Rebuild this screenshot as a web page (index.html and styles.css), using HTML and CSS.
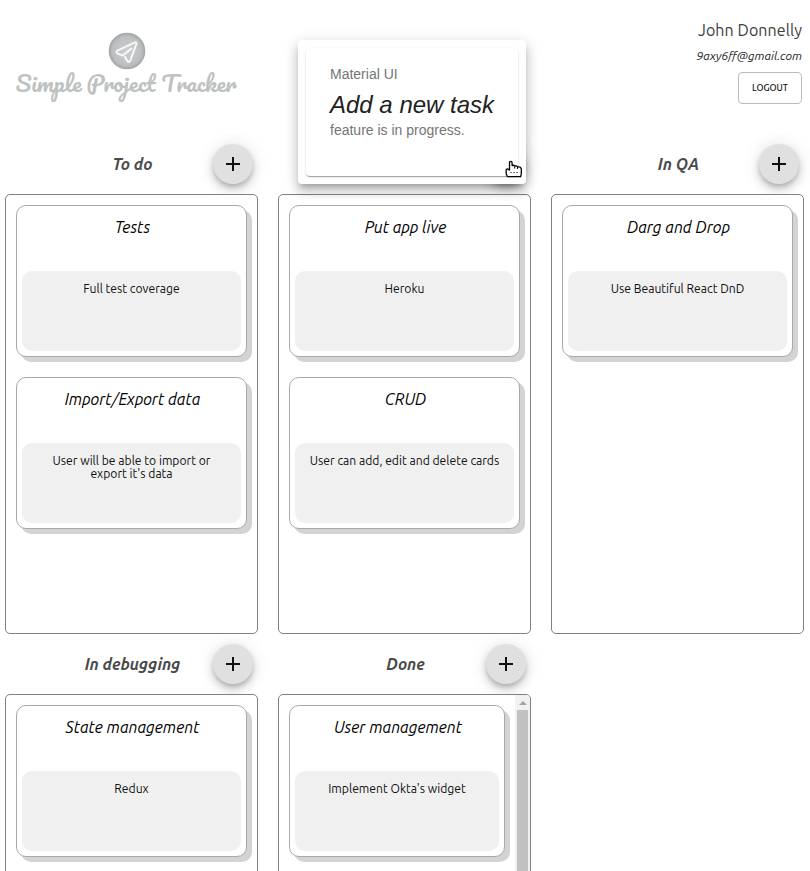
FILE: index.html
```html
<!DOCTYPE html>
<html lang="en">
<head>
<meta charset="utf-8">
<title>Simple Project Tracker</title>
<link rel="stylesheet" href="styles.css">
</head>
<body>
<header class="header">
  <svg class="logo" width="240" height="80" viewBox="0 0 240 80" role="img">
    <defs><radialGradient id="disc"><stop offset="0" stop-color="#cdd0d0"/><stop offset=".8" stop-color="#bcbfbf"/><stop offset="1" stop-color="#a1a4a4"/></radialGradient></defs>
    <circle cx="119" cy="21" r="18.3" fill="url(#disc)"/>
    <path d="M114.7 25.5 L123.5 18.5 M114.7 25.5 Q109.5 24 108.5 22.3 Q108 21.3 110 20.4 L126.5 12.6 Q129 11.6 128.4 14 L122.3 30.5 Q120.8 33.5 119 30.5 L117 27" fill="none" stroke="#f8f9f9" stroke-width="2" stroke-linecap="round" stroke-linejoin="round"/>
    <g class="logo-text">
      <text x="7.5" y="61.5" textLength="66" lengthAdjust="spacingAndGlyphs">Simple</text>
      <text x="78.5" y="61.5" textLength="69" lengthAdjust="spacingAndGlyphs">Project</text>
      <text x="153.5" y="61.5" textLength="75" lengthAdjust="spacingAndGlyphs">Tracker</text>
    </g>
  </svg>
  <div class="user">
    <div class="user-name">John Donnelly</div>
    <div class="user-mail">9axy6ff@gmail.com</div>
    <button class="logout">LOGOUT</button>
  </div>
</header>
<main class="board">
  <section class="column">
    <div class="column-head"><h2>To do</h2><button class="add"><svg width="24" height="24" viewBox="0 0 24 24"><path d="M19 13h-6v6h-2v-6H5v-2h6V5h2v6h6v2z"/></svg></button></div>
    <div class="column-body"><div class="cards">
      <article class="card"><h3>Tests</h3><p>Full test coverage</p></article>
      <article class="card"><h3>Import/Export data</h3><p>User will be able to import or<br>export it's data</p></article>
    </div></div>
  </section>
  <section class="column">
    <div class="column-head"><button class="add"><svg width="24" height="24" viewBox="0 0 24 24"><path d="M19 13h-6v6h-2v-6H5v-2h6V5h2v6h6v2z"/></svg></button></div>
    <div class="column-body"><div class="cards">
      <article class="card"><h3>Put app live</h3><p>Heroku</p></article>
      <article class="card"><h3>CRUD</h3><p>User can add, edit and delete cards</p></article>
    </div></div>
  </section>
  <section class="column">
    <div class="column-head"><h2>In QA</h2><button class="add"><svg width="24" height="24" viewBox="0 0 24 24"><path d="M19 13h-6v6h-2v-6H5v-2h6V5h2v6h6v2z"/></svg></button></div>
    <div class="column-body"><div class="cards">
      <article class="card"><h3>Darg and Drop</h3><p>Use Beautiful React DnD</p></article>
    </div></div>
  </section>
  <section class="column">
    <div class="column-head"><h2>In debugging</h2><button class="add"><svg width="24" height="24" viewBox="0 0 24 24"><path d="M19 13h-6v6h-2v-6H5v-2h6V5h2v6h6v2z"/></svg></button></div>
    <div class="column-body"><div class="cards">
      <article class="card"><h3>State management</h3><p>Redux</p></article>
    </div></div>
  </section>
  <section class="column">
    <div class="column-head"><h2>Done</h2><button class="add"><svg width="24" height="24" viewBox="0 0 24 24"><path d="M19 13h-6v6h-2v-6H5v-2h6V5h2v6h6v2z"/></svg></button></div>
    <div class="column-body"><div class="cards">
      <article class="card"><h3>User management</h3><p>Implement Okta's widget</p></article>
    </div><div class="scrollbar"><div class="scroll-up"></div><div class="scroll-thumb"></div></div></div>
  </section>
</main>
<div class="popover">
  <div class="notice">
    <div class="notice-sub">Material UI</div>
    <div class="notice-title">Add a new task</div>
    <div class="notice-sub">feature is in progress.</div>
  </div>
</div>
<svg class="pointer" width="18" height="18" viewBox="0 0 18 18"><path d="M4.5 10V3Q4.5 1.3 5.8 1.3Q7.1 1.3 7.1 3V5.6Q8.8 4.6 9.9 6.2Q11.6 5.4 12.7 7Q15.6 6.5 16.3 8.7V13.5L15.7 16.6H2.4L1.2 14V9.7Q2.2 8.2 3.8 9.7" fill="#fff" stroke="#000" stroke-width="1.3" stroke-linejoin="round" stroke-linecap="round"/><path d="M9.7 6.5v2M12.5 7v2" stroke="#000"/><path d="M5 12.5h9" stroke="#777" stroke-dasharray="2 1"/></svg>
</body>
</html>
```
FILE: styles.css
```css
* { box-sizing: border-box; }
html, body { height: 100%; overflow: hidden; }
body { margin: 0; background: #fff; font-family: Ubuntu, "Noto Sans", sans-serif; color: #222; }
h2, h3, p { margin: 0; }
button { font-family: inherit; padding: 0; }
.header { height: 134px; display: flex; justify-content: space-between; padding: 20px 8px 0; }
.logo { margin-top: 10px; }
.logo-text { font: 400 22px Pacifico, cursive; fill: #bec2c1; }
.user { display: flex; flex-direction: column; align-items: flex-end; white-space: nowrap; }
.user-name { font-size: 16px; line-height: 20px; color: #3c3c3c; letter-spacing: .08px; }
.user-mail { margin-top: 7px; font-size: 12px; line-height: 17px; font-style: italic; color: #222; }
.logout { margin-top: 8px; width: 64px; height: 32px; border: 1px solid #bbb; border-radius: 4px; background: #fff; font-size: 9px; font-weight: 500; line-height: 16px; color: #111; }
.board { height: calc(100vh - 134px); overflow: hidden; display: grid; grid-template-columns: repeat(3, 253px); column-gap: 20px; padding-left: 5px; }
.column { height: 500px; }
.column-head { height: 60px; display: grid; grid-template-columns: 40px 1fr 40px; align-items: center; padding: 0 5px; }
.column-head h2 { grid-column: 2; padding-left: 2px; text-align: center; font-size: 16px; line-height: 20px; font-style: italic; font-weight: 700; color: #4a4a4a; }
.add { grid-column: 3; width: 40px; height: 40px; border: 0; border-radius: 50%; background: #e0e0e0; box-shadow: 0 3px 5px -1px rgba(0,0,0,.2), 0 6px 10px rgba(0,0,0,.14), 0 1px 18px rgba(0,0,0,.12); display: flex; align-items: center; justify-content: center; fill: #111; }
.column-body { position: relative; height: 440px; border: 1px solid #808080; border-radius: 5px; display: flex; overflow: hidden; background: #fff; }
.cards { flex: 1; padding: 10px; display: flex; flex-direction: column; gap: 20px; }
.card { height: 152px; padding: 5px; border: 1px solid #a9a9a9; border-radius: 10px; background: #fff; box-shadow: 5px 5px 0 #d3d3d3; text-align: center; }
.card h3 { height: 60px; padding: 6px 0 0 2px; font-size: 16px; font-weight: 400; line-height: 20px; font-style: italic; color: #000; white-space: nowrap; }
.card p { height: 80px; padding-top: 11px; border-radius: 10px; background: #f0f0f0; font-size: 12.15px; line-height: 13px; white-space: nowrap; color: #111; }
.scrollbar { width: 15px; background: #f1f1f1; display: flex; flex-direction: column; align-items: center; }
.scroll-up { width: 0; height: 4px; margin: 6px 0 5px; border: 4px solid transparent; border-top: 0; border-bottom-color: #a3a3a3; }
.scroll-thumb { width: 11px; height: 360px; background: #c1c1c1; }
.popover { position: absolute; left: 298px; top: 40px; width: 228px; height: 144px; padding: 8px; border-radius: 4px; background: #fff; box-shadow: 0 5px 5px -3px rgba(0,0,0,.2), 0 8px 10px 1px rgba(0,0,0,.14), 0 3px 14px 2px rgba(0,0,0,.12); }
.notice { height: 128px; padding: 16px 24px; border-radius: 4px; box-shadow: 0 2px 1px -1px rgba(0,0,0,.2), 0 1px 1px rgba(0,0,0,.14), 0 1px 3px rgba(0,0,0,.12); font-family: "Liberation Sans", sans-serif; white-space: nowrap; }
.notice-sub { font-size: 14px; line-height: 20px; color: #757575; }
.notice-title { font-size: 24px; line-height: 32px; padding-top: 5px; height: 36px; font-style: italic; color: #212121; }
.pointer { position: absolute; left: 505px; top: 160px; }
```
